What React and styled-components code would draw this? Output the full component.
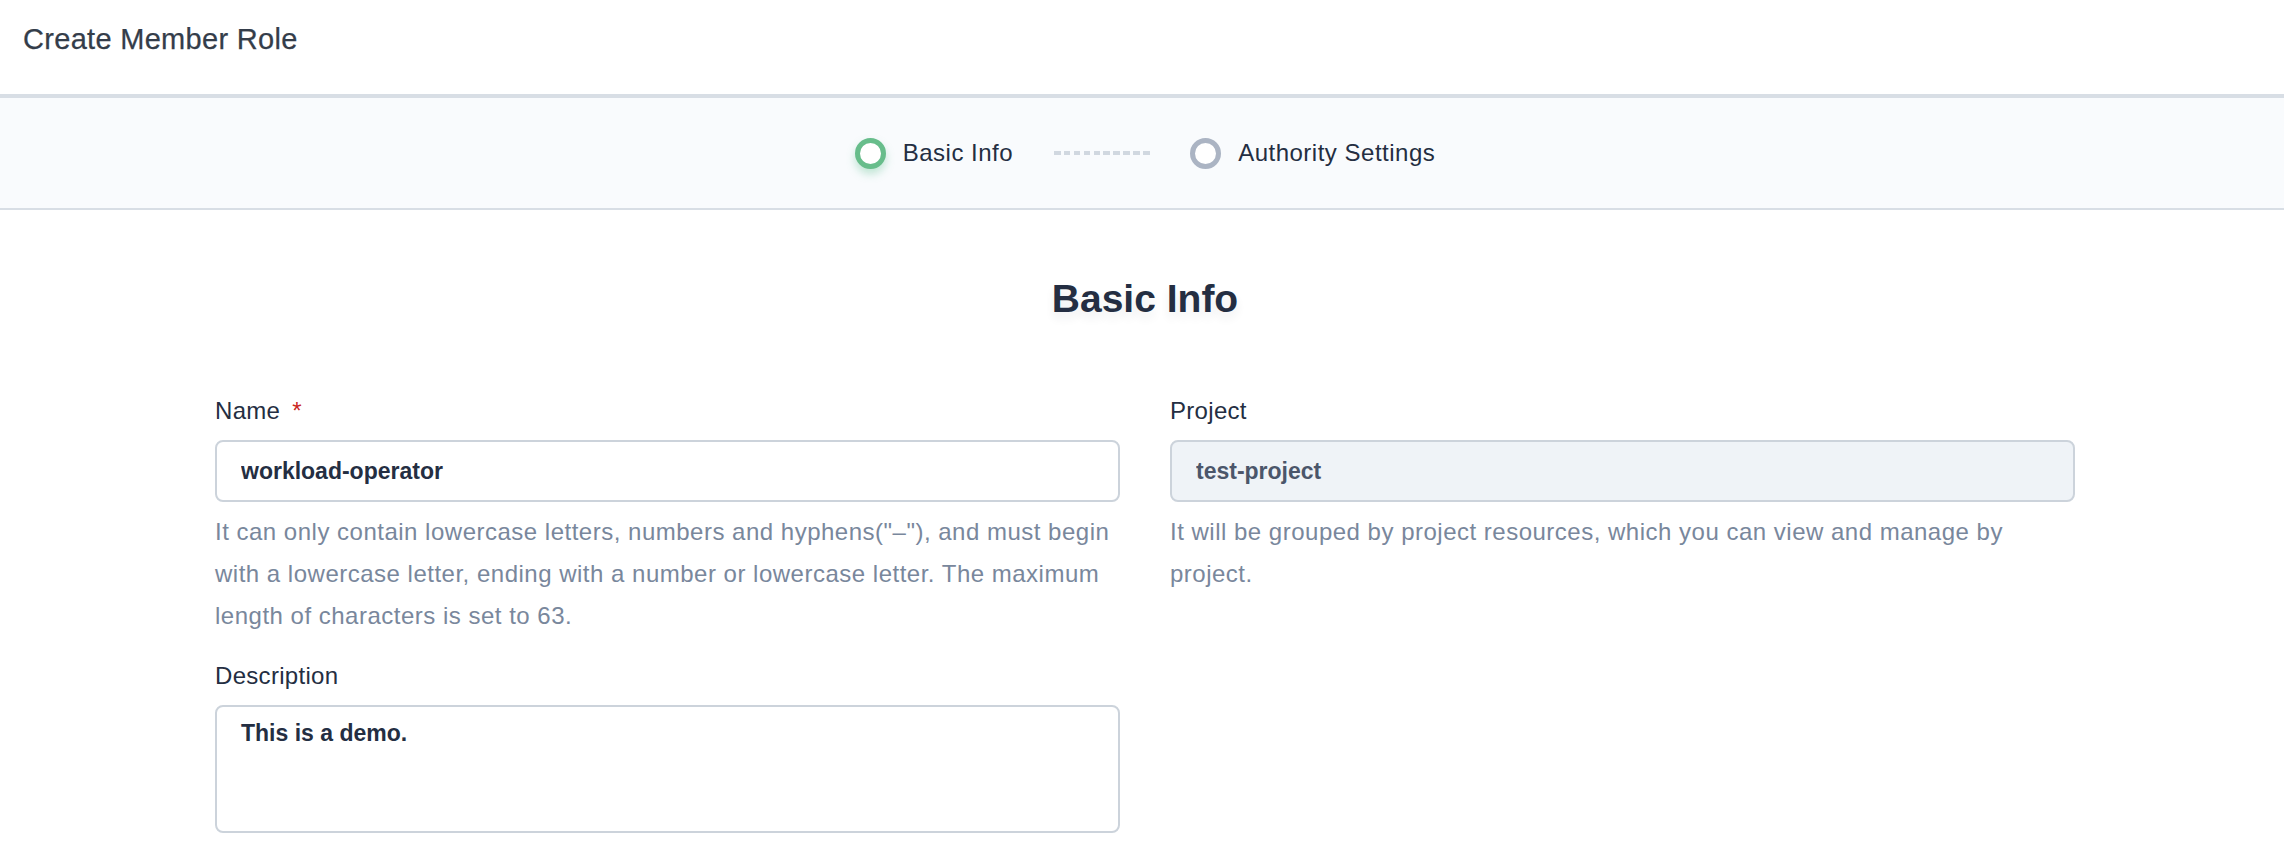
import React from "react";
import styled, { createGlobalStyle } from "styled-components";

const GlobalStyle = createGlobalStyle`
  html, body { margin: 0; padding: 0; background: #ffffff; }
  body { font-family: "Liberation Sans", Arial, sans-serif; color: #242e42; }
  *, *::before, *::after { box-sizing: border-box; }
`;

const Header = styled.header`
  height: 98px;
  padding: 22px 23px 0;
  border-bottom: 4px solid #d8dee5;
  background: #ffffff;
`;

const Title = styled.h1`
  margin: 0;
  font-size: 29px;
  line-height: 34px;
  font-weight: 400;
  letter-spacing: 0.3px;
  color: #343d4a;
  -webkit-text-stroke: 0.25px #343d4a;
`;

const StepBar = styled.nav`
  height: 112px;
  padding-left: 6px;
  background: #f9fbfd;
  border-bottom: 2px solid #d8dee5;
  display: flex;
  align-items: center;
  justify-content: center;
`;

const Step = styled.div`
  display: flex;
  align-items: center;
  gap: 17px;
`;

const StepDot = styled.span`
  width: 31px;
  height: 31px;
  border-radius: 50%;
  background: #ffffff;
  border: 5px solid ${(p) => (p.$active ? "#67bd8b" : "#abb4c3")};
  box-shadow: ${(p) => (p.$active ? "0 5px 9px rgba(85, 188, 138, 0.35)" : "none")};
`;

const StepLabel = styled.span`
  font-size: 24px;
  line-height: 28px;
  letter-spacing: 0.5px;
  color: #242e42;
`;

const Connector = styled.span`
  width: 96px;
  height: 4px;
  margin: 0 40px 0 41px;
  background: repeating-linear-gradient(
    to right,
    #d1d8e0 0 6.5px,
    transparent 6.5px 9.9px
  );
`;

const Content = styled.main`
  padding: 66px 0 0 6px;
`;

const Heading = styled.h2`
  margin: 0;
  text-align: center;
  font-size: 39px;
  line-height: 46px;
  font-weight: 700;
  color: #242e42;
  text-shadow: 0 6px 10px rgba(36, 46, 66, 0.08);
`;

const Form = styled.form`
  margin-top: 75px;
  display: grid;
  grid-template-columns: 905px 905px;
  column-gap: 50px;
  justify-content: center;
  align-items: start;
`;

const Column = styled.div`
  display: flex;
  flex-direction: column;
  gap: 25px;
`;

const Field = styled.div`
  display: flex;
  flex-direction: column;
`;

const Label = styled.label`
  font-size: 24px;
  line-height: 28px;
  letter-spacing: 0.3px;
  color: #242e42;
  margin-bottom: 15px;
`;

const Required = styled.span`
  color: #ca2621;
  margin-left: 12px;
`;

const TextInput = styled.input`
  width: 100%;
  height: 62px;
  padding: 0 24px;
  border: 2px solid #ccd3db;
  border-radius: 8px;
  outline: none;
  font-family: "Liberation Sans", Arial, sans-serif;
  font-size: 23px;
  font-weight: 700;
  color: ${(p) => (p.disabled ? "#4b566a" : "#242e42")};
  -webkit-text-fill-color: ${(p) => (p.disabled ? "#4b566a" : "#242e42")};
  background: ${(p) => (p.disabled ? "#eff3f7" : "#ffffff")};
  opacity: 1;
`;

const TextArea = styled.textarea`
  width: 100%;
  height: 128px;
  padding: 12px 24px;
  border: 2px solid #ccd3db;
  border-radius: 8px;
  outline: none;
  resize: none;
  font-family: "Liberation Sans", Arial, sans-serif;
  font-size: 23px;
  line-height: 28px;
  font-weight: 700;
  color: #242e42;
  background: #ffffff;
`;

const Help = styled.p`
  margin: 9px 0 0;
  font-size: 24px;
  line-height: 42px;
  letter-spacing: 0.5px;
  color: #79879c;
`;

export default function App() {
  return (
    <>
      <GlobalStyle />
      <Header>
        <Title>Create Member Role</Title>
      </Header>
      <StepBar>
        <Step>
          <StepDot $active />
          <StepLabel>Basic Info</StepLabel>
        </Step>
        <Connector />
        <Step>
          <StepDot />
          <StepLabel>Authority Settings</StepLabel>
        </Step>
      </StepBar>
      <Content>
        <Heading>Basic Info</Heading>
        <Form onSubmit={(e) => e.preventDefault()}>
          <Column>
            <Field>
              <Label>
                Name<Required>*</Required>
              </Label>
              <TextInput defaultValue="workload-operator" />
              <Help>
                It can only contain lowercase letters, numbers and hyphens("–"), and must begin
                with a lowercase letter, ending with a number or lowercase letter. The maximum
                length of characters is set to 63.
              </Help>
            </Field>
            <Field>
              <Label>Description</Label>
              <TextArea defaultValue="This is a demo." />
            </Field>
          </Column>
          <Column>
            <Field>
              <Label>Project</Label>
              <TextInput disabled defaultValue="test-project" />
              <Help>
                It will be grouped by project resources, which you can view and manage by project.
              </Help>
            </Field>
          </Column>
        </Form>
      </Content>
    </>
  );
}
